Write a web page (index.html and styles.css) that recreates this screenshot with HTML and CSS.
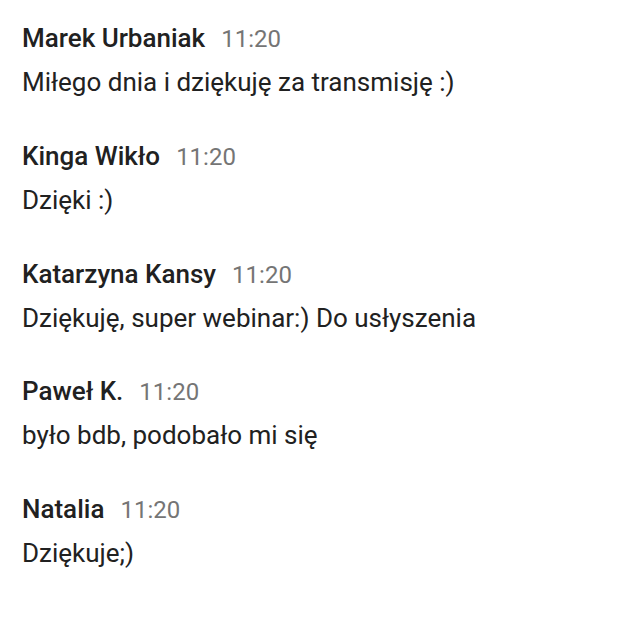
FILE: index.html
```html
<!DOCTYPE html>
<html lang="pl">
<head>
<meta charset="utf-8">
<link rel="stylesheet" href="styles.css">
</head>
<body>
<div class="chat">
  <div class="msg">
    <div class="head"><span class="name">Marek Urbaniak</span><span class="time">11:20</span></div>
    <div class="text">Miłego dnia i dziękuję za transmisję :)</div>
  </div>
  <div class="msg">
    <div class="head"><span class="name">Kinga Wikło</span><span class="time">11:20</span></div>
    <div class="text">Dzięki :)</div>
  </div>
  <div class="msg">
    <div class="head"><span class="name">Katarzyna Kansy</span><span class="time">11:20</span></div>
    <div class="text">Dziękuję, super webinar:) Do usłyszenia</div>
  </div>
  <div class="msg">
    <div class="head"><span class="name">Paweł K.</span><span class="time">11:20</span></div>
    <div class="text">było bdb, podobało mi się</div>
  </div>
  <div class="msg">
    <div class="head"><span class="name">Natalia</span><span class="time">11:20</span></div>
    <div class="text">Dziękuje;)</div>
  </div>
</div>
</body>
</html>
```
FILE: styles.css
```css
html, body {
  margin: 0;
  padding: 0;
  background: #ffffff;
}
body {
  font-family: Roboto, "Noto Sans", sans-serif;
  color: #212121;
}
.chat {
  display: flex;
  flex-direction: column;
  gap: 43.75px;
  padding: 23px 22px;
}
.msg {
  display: flex;
  flex-direction: column;
  gap: 14px;
}
.head {
  display: flex;
  align-items: baseline;
  gap: 16px;
  height: 30px;
  line-height: 30px;
}
.name {
  font-size: 26px;
  font-weight: 500;
  color: #212121;
}
.time {
  font-size: 24px;
  color: #757575;
}
.text {
  font-size: 26px;
  line-height: 30px;
  color: #212121;
}
```
